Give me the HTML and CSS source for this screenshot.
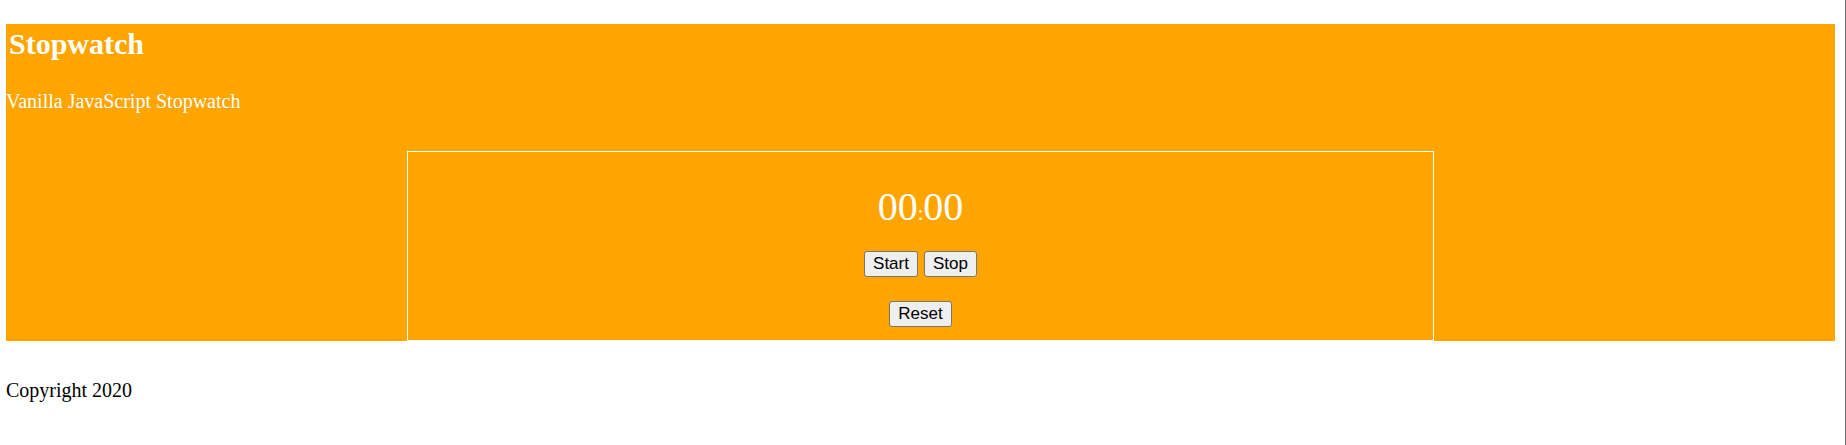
FILE: index.html
```html
<!DOCTYPE html>
<html lang="en">
<head>
<meta charset="utf-8">
<title>Stopwatch</title>
<link rel="stylesheet" href="styles.css">
</head>
<body>
<div class="page">
  <header class="stage">
    <h1 class="title">Stopwatch</h1>
    <p class="subtitle">Vanilla JavaScript Stopwatch</p>
    <div class="watch">
      <p class="timer"><span class="digits">00</span><span class="sep">:</span><span class="digits">00</span></p>
      <div class="row row-first">
        <button class="btn" type="button">Start</button>
        <button class="btn" type="button">Stop</button>
      </div>
      <div class="row row-second">
        <button class="btn" type="button">Reset</button>
      </div>
    </div>
  </header>
  <footer class="footer">
    <p class="copy">Copyright 2020</p>
  </footer>
</div>
</body>
</html>
```

FILE: styles.css
```css
html, body {
  margin: 0;
  padding: 0;
  background: #ffffff;
}

.page {
  box-sizing: border-box;
  min-height: 100vh;
  padding: 24px 10px 0 6px;
  border-right: 1px solid #6b6b6b;
  font-family: "Liberation Serif", "Times New Roman", serif;
  font-size: 20px;
  color: #000;
}

.stage {
  background: #ffa500;
  color: #fff;
  padding-top: 3px;
}

.title {
  margin: 0;
  padding-left: 3px;
  font-size: 30px;
  font-weight: bold;
  line-height: 34px;
}

.subtitle {
  margin: 29px 0 0 0;
  font-size: 20px;
  line-height: 23px;
}

.watch {
  box-sizing: border-box;
  width: 1027px;
  margin: 38px auto 0;
  border: 1px solid #fff;
  padding: 32px 0 13px;
  text-align: center;
}

.timer {
  margin: 0;
  font-size: 40px;
  line-height: 46px;
  height: 46px;
}

.sep {
  font-size: 20px;
  line-height: 1;
}

.row {
  display: flex;
  justify-content: center;
  gap: 6px;
}

.row-first {
  margin-top: 21px;
}

.row-second {
  margin-top: 24px;
}

.btn {
  box-sizing: border-box;
  height: 26px;
  padding: 0 8px;
  border: 1px solid #767676;
  border-radius: 3px;
  background: #efefef;
  color: #000;
  font-family: "Liberation Sans", Arial, sans-serif;
  font-size: 17px;
  line-height: 22px;
}

.footer {
  margin-top: 38px;
}

.copy {
  margin: 0;
  font-size: 20px;
  line-height: 23px;
}
```
